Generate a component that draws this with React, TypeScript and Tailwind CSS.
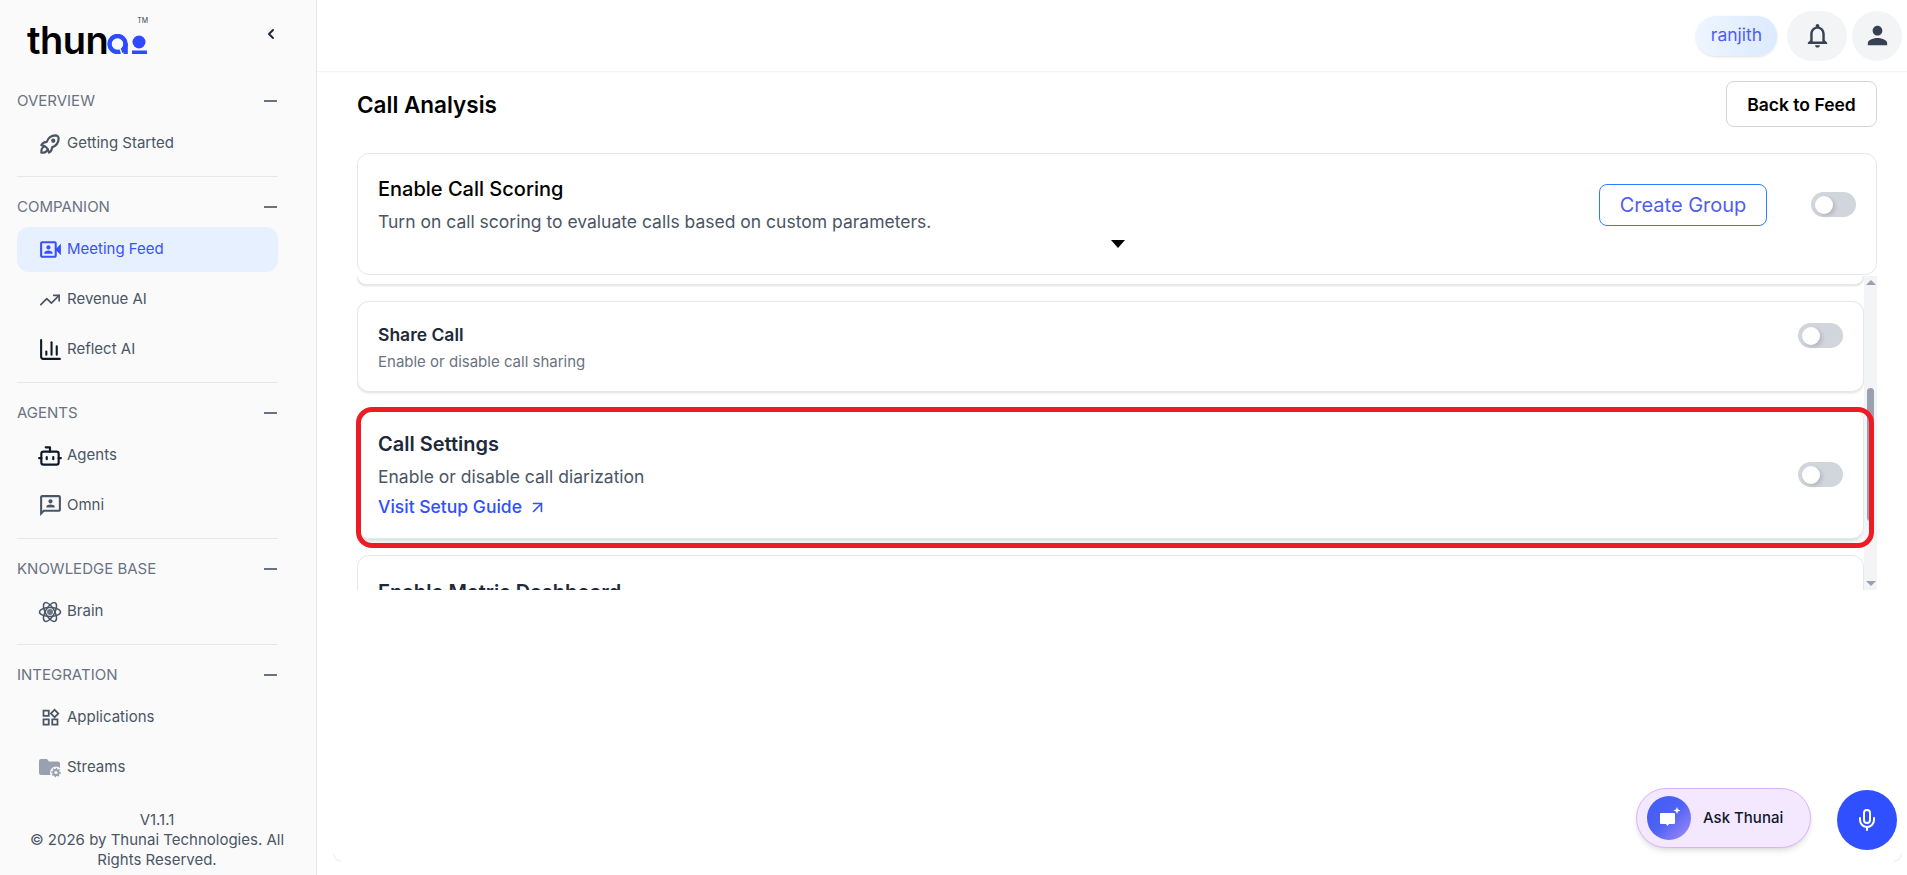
import React from "react";
import { ArrowUpRight, Bot, ChartColumn, ChevronLeft, Mic, TrendingUp } from "lucide-react";
import {
  MdOutline3P,
  MdOutlineNotifications,
  MdOutlineVideoCameraFront,
  MdOutlineWidgets,
  MdPerson,
} from "react-icons/md";
import { TbRocket } from "react-icons/tb";

const StreamsIcon = () => (
  <svg width="22" height="20" viewBox="0 0 22 20" className="text-gray-400">
    <path
      fill="currentColor"
      d="M2 1h6l2 2.500h9a2 2 0 0 1 2 2V15a2 2 0 0 1-2 2H2a2 2 0 0 1-2-2V3a2 2 0 0 1 2-2z"
    />
    <circle cx="17" cy="14.500" r="6" fill="#fafafa" />
    <circle cx="17" cy="14.500" r="2.600" fill="none" stroke="currentColor" strokeWidth="2" />
    <circle cx="17" cy="14.500" r="4" fill="none" stroke="currentColor" strokeWidth="1.500" strokeDasharray="1.500 1.500" />
  </svg>
);

const AtomIcon = () => (
  <svg width="24" height="24" viewBox="0 0 24 24" fill="none" stroke="currentColor" strokeWidth="1.500">
    <ellipse cx="12" cy="12" rx="10.500" ry="4.500" />
    <ellipse cx="12" cy="12" rx="10.500" ry="4.500" transform="rotate(60 12 12)" />
    <ellipse cx="12" cy="12" rx="10.500" ry="4.500" transform="rotate(120 12 12)" />
    <circle cx="12" cy="12" r="3" fill="currentColor" stroke="none" opacity="0.8" />
  </svg>
);

const sections = [
  { title: "Overview", items: [{ label: "Getting Started", icon: <TbRocket size={26} /> }] },
  {
    title: "Companion",
    items: [
      { label: "Meeting Feed", icon: <MdOutlineVideoCameraFront size={25} />, active: true },
      { label: "Revenue AI", icon: <TrendingUp size={22} strokeWidth={1.8} /> },
      { label: "Reflect AI", icon: <ChartColumn size={25} strokeWidth={2} className="text-gray-900" /> },
    ],
  },
  {
    title: "Agents",
    items: [
      { label: "Agents", icon: <Bot size={26} strokeWidth={2} className="text-gray-900" /> },
      { label: "Omni", icon: <MdOutline3P size={25} /> },
    ],
  },
  { title: "Knowledge Base", items: [{ label: "Brain", icon: <AtomIcon /> }] },
  {
    title: "Integration",
    items: [
      { label: "Applications", icon: <MdOutlineWidgets size={21} /> },
      { label: "Streams", icon: <StreamsIcon /> },
    ],
  },
];

const Logo = () => (
  <div className="relative flex items-end h-[30px] w-[122px] text-black">
    <span className="text-[38px] leading-[30px] font-semibold tracking-[-0.5px] font-['Inter',sans-serif]">thun</span>
    <svg width="40" height="20" viewBox="0 0 40 20" className="mb-[1px] -ml-[1px] shrink-0" fill="none">
      <circle cx="10.500" cy="10" r="8" stroke="#2f4bff" strokeWidth="4.500" />
      <rect x="16.500" y="9" width="4.300" height="11" fill="#2f4bff" />
      <path d="M12.500 13.500l2.500 6.500" stroke="#fafafa" strokeWidth="1.500" />
      <circle cx="32" cy="8" r="6.500" fill="#2f4bff" />
      <rect x="25" y="16.500" width="15" height="3.500" fill="#2f4bff" />
    </svg>
    <span className="absolute -top-[8px] right-[1px] text-[7px] leading-[8px] text-gray-700">TM</span>
  </div>
);

const Toggle = () => (
  <div className="flex items-center w-[45px] h-[25px] rounded-full bg-gray-300 pl-[4px] shrink-0">
    <div className="w-[18px] h-[18px] rounded-full bg-white shadow-[2px_2px_4px_rgba(0,0,0,0.15)]" />
  </div>
);

const Sidebar = () => (
  <aside className="flex flex-col w-[317px] h-[875px] shrink-0 bg-[#fafafa] border-r border-gray-200">
    <div className="flex items-start justify-between h-[91px] pl-[27px] pr-[37px] pt-[25px]">
      <Logo />
      <ChevronLeft size={16} strokeWidth={3} className="mt-[1px] text-gray-800" />
    </div>
    <nav className="flex flex-col flex-1 px-[17px] pr-[38px]">
      {sections.map((section, i) => (
        <div key={section.title} className={i > 0 ? "border-t border-gray-200 pt-5 mt-[10px]" : ""}>
          <div className="flex items-center justify-between h-5 text-[15px] uppercase text-gray-500">
            <span>{section.title}</span>
            <span className="w-[13px] h-[2px] mr-[1px] bg-gray-500" />
          </div>
          <div className="flex flex-col gap-[5px] mt-[10px]">
            {section.items.map((item) => (
              <div
                key={item.label}
                className={`flex items-center gap-[6px] h-[45px] pl-[22px] rounded-xl text-[15px] ${
                  item.active ? "bg-[#e6f0fe] text-[#3b50f6]" : "text-gray-600"
                }`}
              >
                <span className="flex justify-center items-center w-[22px] h-[24px] shrink-0 [&>svg]:shrink-0">
                  {item.icon}
                </span>
                {item.label}
              </div>
            ))}
          </div>
        </div>
      ))}
    </nav>
    <div className="pl-[10px] pr-[12px] pb-[5px] text-center text-[15px] leading-5 text-gray-600">
      <p>V1.1.1</p>
      <p>© 2026 by Thunai Technologies. All Rights Reserved.</p>
    </div>
  </aside>
);

const TopBar = () => (
  <header className="flex items-center justify-end h-[72px] pr-[5px] border-b border-gray-100 shadow-[0_1px_2px_rgba(0,0,0,0.02)]">
    <div className="flex items-center justify-center w-[81px] h-[40px] rounded-full bg-gradient-to-r from-[#eef5ff] to-[#dbeafe] text-[17.500px] text-[#4f5ef0] shadow-sm">
      ranjith
    </div>
    <div className="flex items-center justify-center w-[60px] h-[50px] ml-[10px] rounded-full bg-gray-100 text-gray-700">
      <MdOutlineNotifications size={29} />
    </div>
    <div className="flex items-center justify-center w-[50px] h-[50px] ml-[5px] rounded-full bg-gray-100 text-gray-700">
      <MdPerson size={29} />
    </div>
  </header>
);

const ScrollTrack = () => (
  <div className="flex flex-col items-center w-[13px] h-full py-[4px] bg-gray-100">
    <span className="w-0 h-0 border-x-[5px] border-x-transparent border-b-[5px] border-b-gray-400" />
    <span className="w-[7px] h-[133px] mt-[103px] rounded-full bg-gray-400" />
    <span className="w-0 h-0 mt-auto border-x-[5px] border-x-transparent border-t-[5px] border-t-gray-400" />
  </div>
);

const SettingsList = () => (
  <div className="flex items-stretch h-[314px] mt-[1px]">
    <div className="flex flex-col flex-1 gap-4 overflow-hidden">
      <div className="h-[9px] shrink-0 rounded-b-xl bg-white border border-t-0 border-gray-200 shadow-sm" />
      <div className="flex items-start justify-between h-[91px] shrink-0 pl-5 pr-[20px] pt-[21px] rounded-xl bg-white border border-gray-200 shadow-sm">
        <div>
          <h3 className="text-[17.500px] leading-6 font-semibold text-gray-800">Share Call</h3>
          <p className="mt-[5px] text-[15px] leading-5 text-gray-500">Enable or disable call sharing</p>
        </div>
        <Toggle />
      </div>
      <div className="flex items-start justify-between h-[131px] shrink-0 pl-5 pr-[20px] pt-[23px] rounded-xl bg-white border border-gray-200 shadow-md">
        <div>
          <h3 className="text-xl leading-6 font-semibold text-gray-800">Call Settings</h3>
          <p className="mt-[9px] text-[17.500px] leading-6 text-gray-600">Enable or disable call diarization</p>
          <a className="flex items-center gap-[6px] mt-[6px] text-[17.500px] leading-6 font-medium text-[#304ffe]">
            Visit Setup Guide
            <ArrowUpRight size={19} strokeWidth={2} />
          </a>
        </div>
        <div className="pt-[30px]">
          <Toggle />
        </div>
      </div>
      <div className="h-[100px] shrink-0 pl-5 pt-6 rounded-xl bg-white border border-gray-200">
        <h3 className="text-xl leading-6 font-semibold text-gray-800">Enable Metric Dashboard</h3>
      </div>
    </div>
    <ScrollTrack />
  </div>
);

const App = () => (
  <div className="relative flex w-[1907px] h-[875px] overflow-hidden bg-white font-['Inter',sans-serif]">
    <Sidebar />
    <main className="relative flex-1">
      <TopBar />
      <div className="pl-[40px] pr-[30px] pt-[9px]">
        <div className="flex items-center justify-between">
          <h1 className="mt-[1px] text-[22.500px] font-semibold text-black">Call Analysis</h1>
          <button className="w-[151px] h-[46px] pt-[2px] rounded-lg border border-gray-300 text-[17.500px] font-semibold text-black">
            Back to Feed
          </button>
        </div>
        <div className="relative flex items-center justify-between h-[122px] mt-[26px] pl-[20px] pr-[20px] rounded-xl border border-gray-200 bg-white">
          <div className="-mt-[18px]">
            <h2 className="text-xl font-medium text-black">Enable Call Scoring</h2>
            <p className="mt-[6px] text-[17.500px] text-gray-600">
              Turn on call scoring to evaluate calls based on custom parameters.
            </p>
          </div>
          <div className="flex items-center gap-[44px] -mt-[19px]">
            <button className="w-[168px] h-[42px] rounded-lg border border-blue-500 text-xl text-[#4f5ef0]">
              Create Group
            </button>
            <Toggle />
          </div>
          <span className="absolute left-[753px] top-[86px] w-0 h-0 border-x-[7px] border-x-transparent border-t-[8px] border-t-black" />
        </div>
        <SettingsList />
      </div>
      <div className="absolute left-[39px] top-[407px] w-[1518px] h-[141px] rounded-[16px] border-[5px] border-[#ed1c24]" />
      <span className="absolute left-[16px] bottom-[13px] w-[8px] h-[8px] rounded-bl-[8px] border-l-2 border-b-2 border-gray-100" />
      <span className="absolute right-[5px] bottom-[13px] w-[8px] h-[8px] rounded-br-[8px] border-r-2 border-b-2 border-gray-100" />
      <div className="absolute right-[10px] bottom-[25px] flex items-center gap-[26px]">
        <div className="flex items-center gap-[12px] w-[175px] h-[60px] pl-[10px] -mt-[4px] rounded-full border border-purple-300 bg-[#f3e8ff] shadow-md text-[15px] font-medium text-gray-900">
          <span className="flex items-center justify-center w-[44px] h-[44px] rounded-full bg-gradient-to-br from-[#3f5cf6] via-[#4f62f3] to-[#a78bfa]">
            <svg width="24" height="24" viewBox="0 0 24 24" fill="white">
              <path d="M4 7h13a1 1 0 0 1 1 1v9a1 1 0 0 1-1 1h-5l-1.500 2-1.500-2H4a1 1 0 0 1-1-1V8a1 1 0 0 1 1-1z" />
              <path d="M20 1l1 2.500L23.500 4.500 21 5.500 20 8l-1-2.500-2.500-1L19 3.500z" />
            </svg>
          </span>
          Ask Thunai
        </div>
        <div className="flex items-center justify-center w-[60px] h-[60px] rounded-full bg-[#304ffe] text-white">
          <Mic size={24} strokeWidth={2} />
        </div>
      </div>
    </main>
  </div>
);

export default App;
